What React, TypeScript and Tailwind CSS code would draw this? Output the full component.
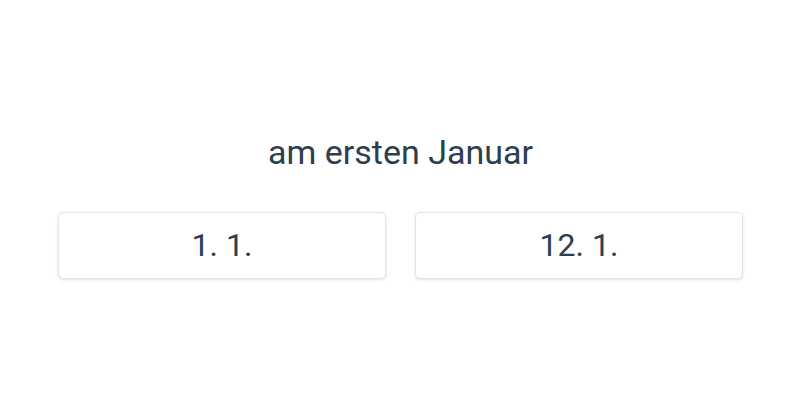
import React from 'react';

const App: React.FC = () => {
    const options = ['1. 1.', '12. 1.'];

    return (
        <div className="h-screen w-full bg-white flex flex-col items-center justify-center pl-[58px] pr-[57px] text-[#2c3e50] font-['Roboto','Liberation_Sans',sans-serif]">
            <h1 className="text-[34px] leading-[40px] font-normal mb-[40px] mt-[10px]">am ersten Januar</h1>
            <div className="w-full grid grid-cols-2 gap-[29px]">
                {options.map((opt) => (
                    <button
                        key={opt}
                        className="h-[67px] bg-white rounded-[5px] border border-[#e4e4e4] shadow-[0_1px_3px_rgba(0,0,0,0.12)] text-[32px] text-[#2c3e50]"
                    >
                        {opt}
                    </button>
                ))}
            </div>
        </div>
    );
};

export default App;
